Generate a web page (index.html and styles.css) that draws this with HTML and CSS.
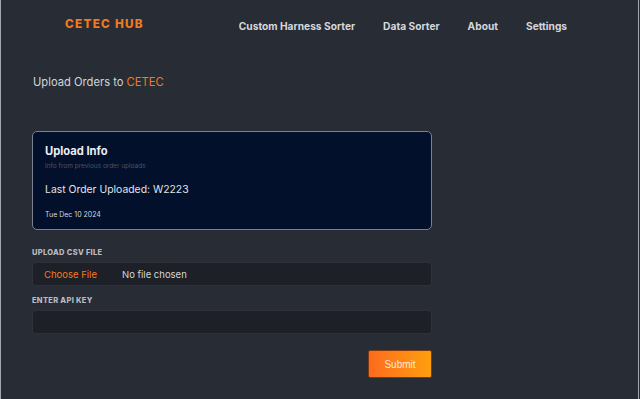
FILE: index.html
```html
<!DOCTYPE html>
<html lang="en">

<head>
  <meta charset="UTF-8" />
  <meta name="viewport" content="width=device-width, initial-scale=1.0" />
  <title>CETEC HUB - Upload Orders</title>
  <link rel="stylesheet" href="styles.css">
</head>

<body>
  <div class="frame">
    <nav class="navbar">
      <div class="logo">CETEC HUB</div>
      <ul class="nav-links">
        <li><a href="#">Custom Harness Sorter</a></li>
        <li><a href="#">Data Sorter</a></li>
        <li><a href="#">About</a></li>
        <li><a href="#">Settings</a></li>
      </ul>
    </nav>

    <main class="content">
      <h2 class="page-title">Upload Orders to <span class="accent">CETEC</span></h2>

      <div class="upload-card">
        <h3 class="card-title">Upload Info</h3>
        <p class="card-sub">Info from previous order uploads</p>
        <p class="last-order">Last Order Uploaded: W2223</p>
        <p class="card-date">Tue Dec 10 2024</p>
      </div>

      <form class="upload-form">
        <label class="field-label" for="csv">Upload CSV File</label>
        <div class="file-box">
          <span class="choose">Choose File</span>
          <span class="no-file">No file chosen</span>
        </div>

        <label class="field-label" for="apikey">Enter API Key</label>
        <input class="text-box" type="text" id="apikey" name="apikey">

        <div class="actions">
          <button type="submit" class="submit-btn">Submit</button>
        </div>
      </form>
    </main>
  </div>
</body>

</html>
```

FILE: styles.css
```css
html,
body {
  margin: 0;
  height: 100%;
}

body {
  background-color: #282c35;
  font-family: Inter, "Noto Sans", sans-serif;
}

.frame {
  height: 100%;
  box-sizing: border-box;
  border-left: 1px solid #a3a6ab;
  border-right: 1px solid #a3a6ab;
  margin-right: 1px;
}

a {
  text-decoration: none;
}

/* nav */
.navbar {
  display: flex;
  align-items: center;
  height: 48px;
  padding-left: 64px;
}

.logo {
  color: #f27a1c;
  font-weight: 800;
  font-size: 11.7px;
  letter-spacing: 1.3px;
}

.nav-links {
  display: flex;
  gap: 28px;
  list-style: none;
  margin: 0 0 0 95px;
  padding: 0;
}

.nav-links a {
  color: #d6d7da;
  font-weight: 700;
  font-size: 10.2px;
}

/* main */
.content {
  width: 400px;
  margin-left: 31px;
  padding-top: 27px;
}

.page-title {
  margin: 0 0 42px 1px;
  font-size: 11.2px;
  font-weight: 400;
  color: #d3d4d7;
}

.accent {
  color: #f27a1c;
}

.upload-card {
  background-color: #02102b;
  border: 1px solid #7b8190;
  border-radius: 5px;
  padding: 12px 12px 10px;
  color: #eceef2;
}

.card-title {
  margin: 0;
  font-size: 11.2px;
  font-weight: 700;
}

.card-sub {
  margin: 4px 0 0;
  font-size: 6.5px;
  color: #4a5468;
}

.last-order {
  margin: 13px 0 0;
  font-size: 10.4px;
  color: #e1e3e8;
}

.card-date {
  margin: 14px 0 0;
  font-size: 7px;
  color: #d5d7dc;
}

/* form */
.upload-form {
  display: flex;
  flex-direction: column;
  margin-top: 18px;
}

.field-label {
  font-size: 7.5px;
  font-weight: 800;
  text-transform: uppercase;
  color: #b9bbc0;
  letter-spacing: 0.3px;
  margin-bottom: 5px;
}

.file-box,
.text-box {
  height: 24px;
  box-sizing: border-box;
  background-color: #1e2027;
  border: 1px solid #2e3139;
  border-radius: 3px;
  margin-bottom: 10px;
}

.file-box {
  display: flex;
  align-items: center;
  font-size: 9.5px;
  padding-left: 11px;
}

.choose {
  color: #f27a1c;
  width: 78px;
}

.no-file {
  color: #d3d4d7;
}

.text-box {
  width: 100%;
  outline: none;
}

.actions {
  display: flex;
  justify-content: flex-end;
  margin-top: 6px;
}

.submit-btn {
  width: 64px;
  height: 28px;
  border: 1px solid #7a3a10;
  border-radius: 2px;
  background: linear-gradient(90deg, #fe6a1e, #fe9f0e);
  color: #fde9dc;
  font-family: "Liberation Sans", Arial, sans-serif;
  font-size: 10px;
  cursor: pointer;
}
```
